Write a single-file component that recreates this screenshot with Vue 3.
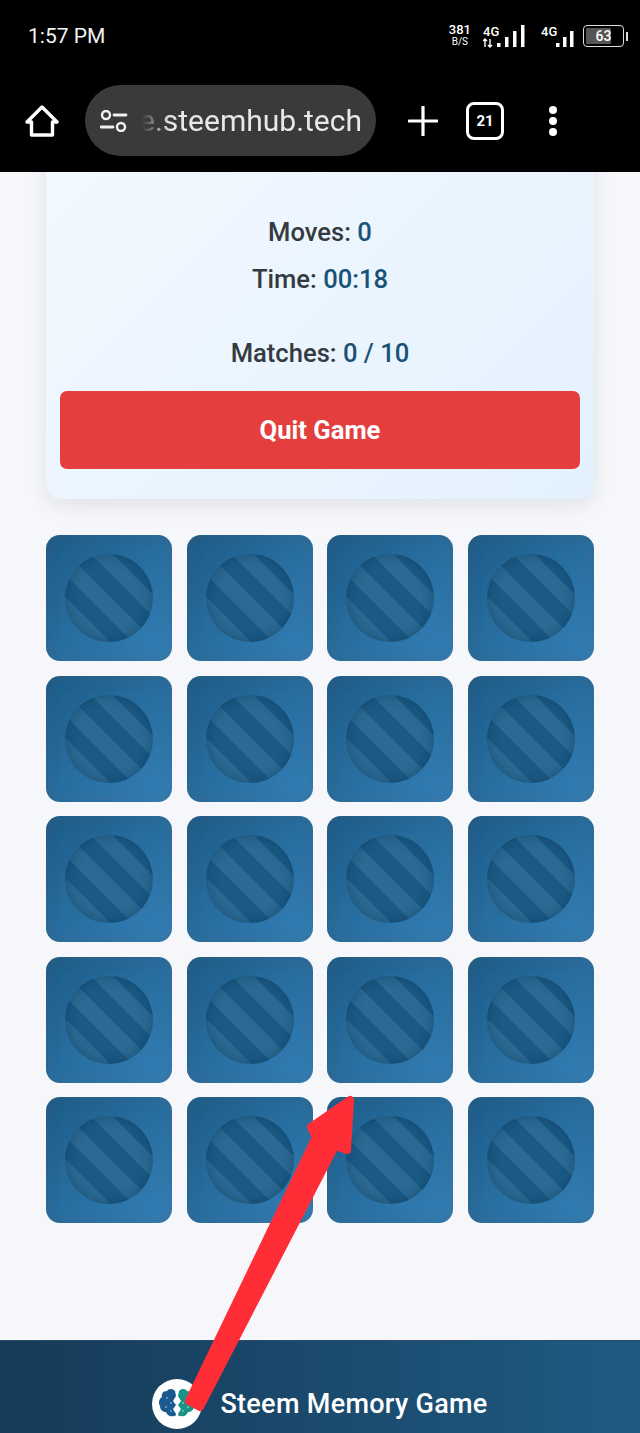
<script setup>
const tiles = Array.from({ length: 20 }, (_, i) => i + 1);
const stats = [
  { label: 'Moves:', value: '0' },
  { label: 'Time:', value: '00:18' },
];
</script>

<template>
  <div class="page">
    <header class="chrome">
      <div class="status-bar">
        <span class="clock">1:57 PM</span>
        <div class="status-icons">
          <div class="speed">
            <b>381</b>
            <small>B/S</small>
          </div>
          <svg class="signal" width="50" height="26" viewBox="0 0 50 26">
            <text x="0" y="13" class="net">4G</text>
            <path d="M2 16v8M0 18l2-2 2 2M7 16v8M5 22l2 2 2-2" stroke="#fff" stroke-width="1.4" fill="none" />
            <rect x="14" y="20" width="3.5" height="4" fill="#fff" />
            <rect x="22" y="14" width="3.5" height="10" fill="#fff" />
            <rect x="30" y="8" width="3.5" height="16" fill="#fff" />
            <rect x="38" y="2" width="3.5" height="22" fill="#fff" />
          </svg>
          <svg class="signal" width="34" height="26" viewBox="0 0 34 26">
            <text x="0" y="13" class="net">4G</text>
            <rect x="15" y="20" width="3.5" height="4" fill="#fff" />
            <rect x="22" y="14" width="3.5" height="10" fill="#fff" />
            <rect x="29" y="8" width="3.5" height="16" fill="#fff" />
          </svg>
          <div class="battery">
            <div class="battery-body">
              <span class="battery-level"></span>
              <span class="battery-num">63</span>
            </div>
            <span class="battery-tip"></span>
          </div>
        </div>
      </div>

      <div class="toolbar">
        <svg class="home" width="34" height="32" viewBox="0 0 34 32">
          <path d="M17 2 L32 17 H27.5 V30 H6.5 V17 H2 Z" fill="none" stroke="#fff" stroke-width="3.4" stroke-linejoin="round" />
        </svg>
        <div class="url-pill">
          <svg width="28" height="22" viewBox="0 0 28 22">
            <circle cx="6" cy="5" r="4" fill="none" stroke="#f0f0f0" stroke-width="2.4" />
            <path d="M14 5h12M1 17h12" stroke="#f0f0f0" stroke-width="2.8" stroke-linecap="round" />
            <circle cx="21" cy="17" r="4" fill="none" stroke="#f0f0f0" stroke-width="2.4" />
          </svg>
          <div class="url-text">e.steemhub.tech</div>
        </div>
        <svg class="plus" width="30" height="30" viewBox="0 0 30 30">
          <path d="M15 1v28M1 15h28" stroke="#fff" stroke-width="3.2" stroke-linecap="round" />
        </svg>
        <div class="tab-count">21</div>
        <div class="menu-dots"><i></i><i></i><i></i></div>
      </div>
    </header>

    <main class="content">
      <section class="game-info">
        <p class="stat">Player: <span>Steem</span></p>
        <div class="stat-group">
          <p v-for="s in stats" :key="s.label" class="stat">{{ s.label }} <strong>{{ s.value }}</strong></p>
        </div>
        <p class="stat">Matches: <strong>0 / 10</strong></p>
        <button class="quit-btn">Quit Game</button>
      </section>

      <section class="board">
        <div v-for="t in tiles" :key="t" class="tile">
          <div class="tile-disc"></div>
        </div>
      </section>
    </main>

    <footer class="site-footer">
      <div class="logo">
        <svg width="38" height="32" viewBox="0 0 38 32">
          <path d="M17 3c-3-3-7-2-8 0-4 0-6 3-5 6-3 2-4 6-2 9 0 4 3 6 6 6 1 3 4 5 7 4 2 1 3-1 3-2l-3-5 3-4-3-4 3-5z" fill="#1b5a8e" />
          <path d="M21 3c3-3 7-2 8 0 4 0 6 3 5 6 3 2 4 6 2 9 0 4-3 6-6 6-1 3-4 5-7 4-2 1-3-1-3-2l3-5-3-4 3-4-3-5z" fill="#1a9488" />
          <g fill="#6fa8d0"><circle cx="9" cy="10" r="1" /><circle cx="13" cy="15" r="1" /><circle cx="8" cy="19" r="1" /><circle cx="13" cy="23" r="1" /></g>
          <g fill="#5fd0c0"><circle cx="29" cy="10" r="1" /><circle cx="25" cy="15" r="1" /><circle cx="30" cy="19" r="1" /><circle cx="25" cy="23" r="1" /></g>
        </svg>
      </div>
      <span class="brand">Steem Memory Game</span>
    </footer>

    <!-- red annotation arrow drawn over the screenshot -->
    <svg class="arrow" width="640" height="1433" viewBox="0 0 640 1433">
      <path d="M189 1401 L316 1137 L311 1127 L350 1100 L347 1150 L335 1146 L200 1407 Z" fill="#ff2d36" stroke="#ff2d36" stroke-width="8" stroke-linejoin="round" />
    </svg>
  </div>
</template>

<style scoped>
.page {
  position: relative;
  width: 640px;
  height: 1433px;
  overflow: hidden;
  display: flex;
  flex-direction: column;
  background: #f5f7fb;
  font-family: Roboto, "Liberation Sans", sans-serif;
}

.chrome {
  position: relative;
  z-index: 2;
  height: 172px;
  flex: none;
  background: #000;
  color: #fff;
}

.status-bar {
  height: 72px;
  padding: 0 12px 0 28px;
  display: flex;
  align-items: center;
  justify-content: space-between;
}

.clock {
  font-size: 21px;
  color: #f2f2f2;
}

.status-icons {
  display: flex;
  align-items: center;
  gap: 8px;
}

.speed {
  display: flex;
  flex-direction: column;
  align-items: center;
  line-height: 12px;
  margin-right: 4px;
}

.speed b {
  font-size: 13px;
  font-weight: 500;
}

.speed small {
  font-size: 10px;
}

.net {
  font: 500 13px Roboto, sans-serif;
  fill: #fff;
}

.battery {
  display: flex;
  align-items: center;
  gap: 2px;
}

.battery-body {
  position: relative;
  width: 39px;
  height: 20px;
  border: 1.5px solid #ddd;
  border-radius: 4px;
  display: flex;
  align-items: center;
  justify-content: center;
  overflow: hidden;
}

.battery-level {
  position: absolute;
  left: 2px;
  top: 2px;
  bottom: 2px;
  width: 63%;
  background: #555;
  border-radius: 1px;
}

.battery-num {
  position: relative;
  font-size: 14px;
  font-weight: 500;
}

.battery-tip {
  width: 2px;
  height: 9px;
  background: #ddd;
}

.toolbar {
  height: 71px;
  margin-top: 13px;
  padding-left: 25px;
  display: flex;
  align-items: center;
}

.home {
  margin-top: 1px;
}

.url-pill {
  width: 291px;
  height: 71px;
  margin-left: 26px;
  padding: 0 14px 0 15px;
  box-sizing: border-box;
  border-radius: 36px;
  background: #3a3a3a;
  display: flex;
  align-items: center;
  gap: 10px;
}

.url-text {
  flex: 1;
  text-align: right;
  white-space: nowrap;
  font-size: 30px;
  color: #e8e8e8;
  -webkit-mask-image: linear-gradient(90deg, transparent 4px, #000 32px);
  mask-image: linear-gradient(90deg, transparent 4px, #000 32px);
}

.plus {
  margin-left: 32px;
}

.tab-count {
  width: 32px;
  height: 32px;
  margin-left: 28px;
  border: 3px solid #fff;
  border-radius: 8px;
  display: flex;
  align-items: center;
  justify-content: center;
  font-size: 15px;
  font-weight: 700;
}

.menu-dots {
  margin-left: 45px;
  display: flex;
  flex-direction: column;
  gap: 3px;
}

.menu-dots i {
  display: block;
  width: 8px;
  height: 8px;
  border-radius: 50%;
  background: #fff;
}

.content {
  flex: 1;
  min-height: 0;
  padding: 0 46px;
}

.game-info {
  margin-top: -57px;
  padding: 20px 14px 30px;
  width: 548px;
  box-sizing: border-box;
  border-radius: 16px;
  background: linear-gradient(135deg, #f3f9ff, #e3f1fe);
  box-shadow: 0 6px 20px rgba(0, 0, 0, 0.09);
  text-align: center;
}

.stat-group {
  margin: 27px 0;
}

.stat {
  margin: 0;
  line-height: 47px;
  font-size: 25.6px;
  font-weight: 500;
  color: #343a40;
}

.stat strong {
  font-weight: 500;
  color: #1a5276;
}

.quit-btn {
  display: block;
  width: 100%;
  height: 78px;
  margin-top: 14px;
  border: none;
  border-radius: 7px;
  background: #e53e3e;
  color: #fff;
  font-family: inherit;
  font-size: 25.6px;
  font-weight: 700;
  cursor: pointer;
}

.board {
  margin-top: 36px;
  display: grid;
  grid-template-columns: repeat(4, 126px);
  gap: 14.5px;
}

.tile {
  height: 126px;
  border-radius: 14px;
  background: linear-gradient(135deg, #1c5c88, #3380b8);
  box-shadow: inset 0 0 14px rgba(70, 90, 110, 0.35);
  display: flex;
  align-items: center;
  justify-content: center;
}

.tile-disc {
  width: 88px;
  height: 88px;
  border-radius: 50%;
  background: repeating-linear-gradient(45deg, #1a5a85 0, #1a5a85 16px, #2a6a93 16px, #2a6a93 32px);
  box-shadow: inset 0 0 12px rgba(10, 40, 70, 0.4);
}

.site-footer {
  height: 93px;
  flex: none;
  box-sizing: border-box;
  padding-top: 38px;
  display: flex;
  justify-content: center;
  align-items: flex-start;
  gap: 18px;
  background: linear-gradient(90deg, #163a58, #1f5a82);
  border-top: 1px solid #2a4a66;
}

.logo {
  width: 50px;
  height: 50px;
  border-radius: 50%;
  background: #fff;
  display: flex;
  align-items: center;
  justify-content: center;
}

.brand {
  line-height: 50px;
  font-size: 27px;
  font-weight: 500;
  letter-spacing: 0.3px;
  color: #fff;
}

.arrow {
  position: absolute;
  left: 0;
  top: 0;
  z-index: 3;
  pointer-events: none;
}
</style>
